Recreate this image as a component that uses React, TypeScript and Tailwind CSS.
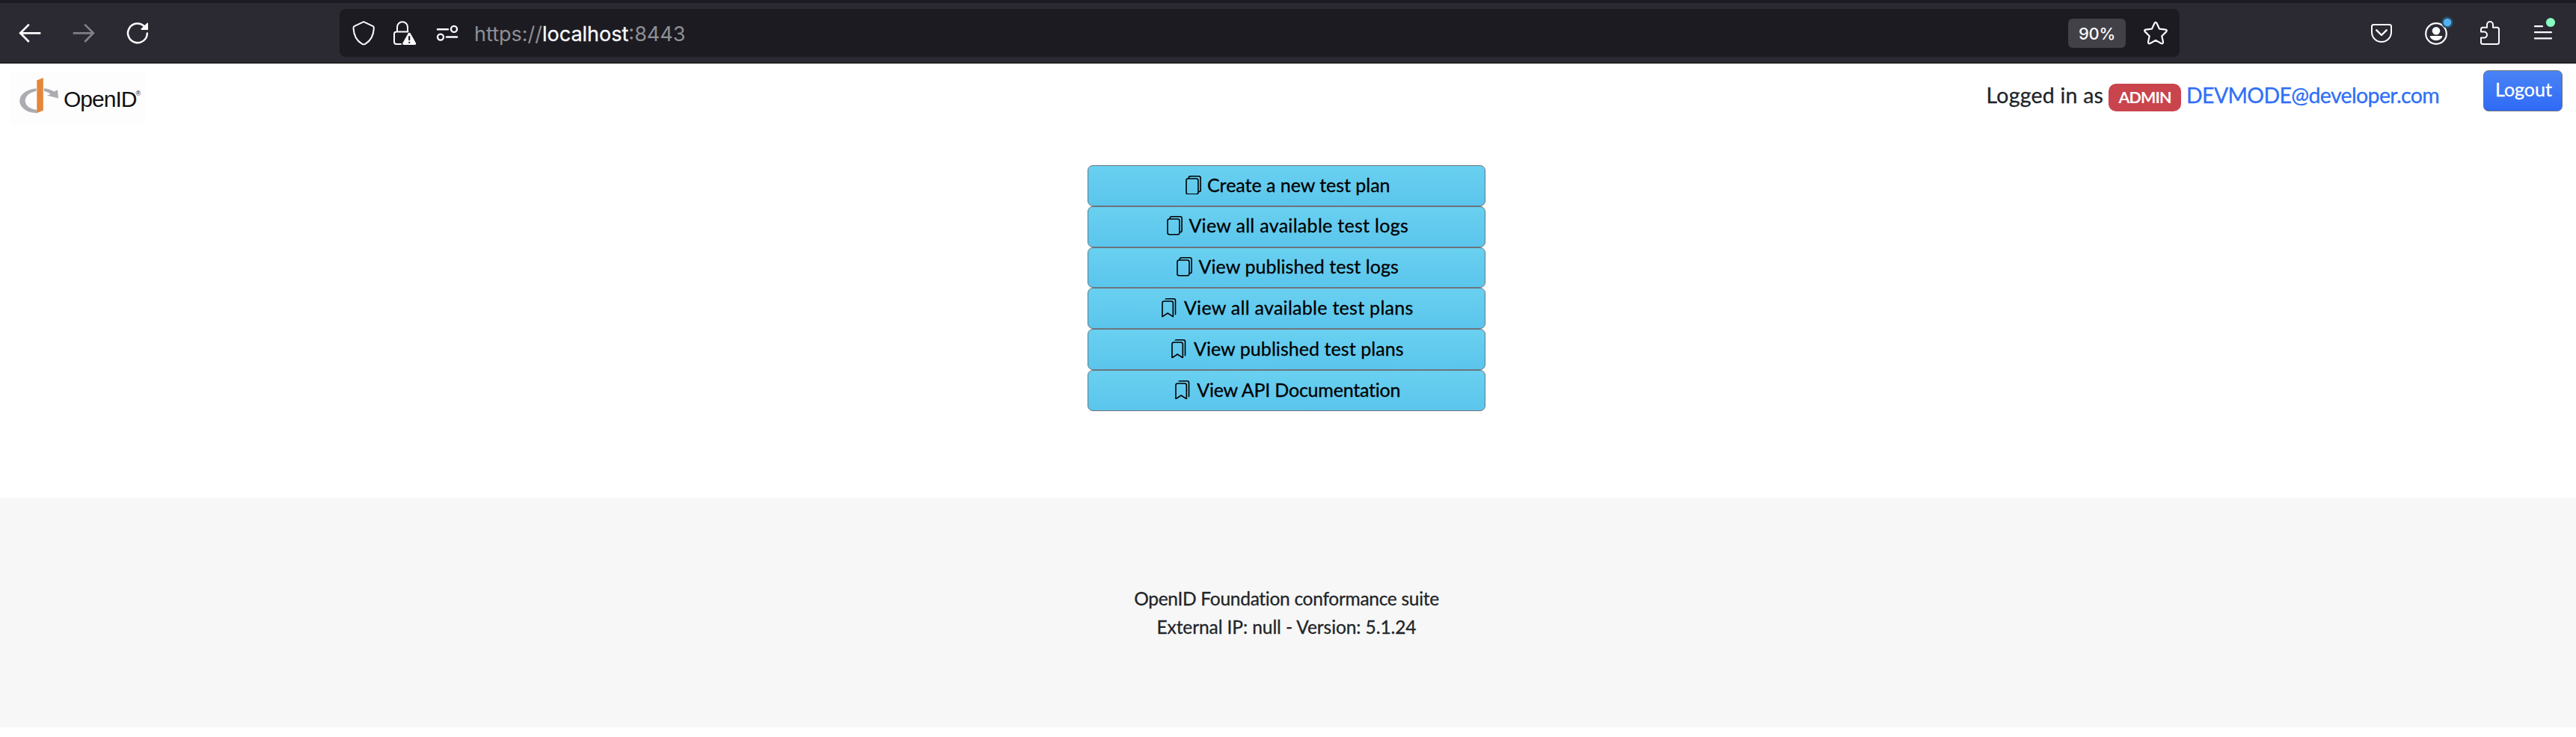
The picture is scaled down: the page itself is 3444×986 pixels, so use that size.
import type { ReactNode } from "react";
import { BsBookmarks, BsFiles } from "react-icons/bs";

type IconProps = { box: string; className?: string; children: ReactNode };

function Icon({ box, className = "", children }: IconProps) {
  return (
    <svg
      viewBox={box}
      className={`h-10 w-10 shrink-0 overflow-visible ${className}`}
      fill="none"
      stroke="currentColor"
      strokeWidth="2"
      strokeLinecap="round"
      strokeLinejoin="round"
    >
      {children}
    </svg>
  );
}

function BrowserToolbar() {
  return (
    <div className="h-[85px] border-t-4 border-b border-t-[#1c1b22] border-b-[#0c0c0d] bg-[#2b2a33]">
      <div className="flex h-20 items-center pl-[20px] text-[#fbfbfe]">
        <Icon box="20 24 40 40">
          <path d="M53 44.3H27.5M37.8 33.6L27.2 44.3L37.8 55" strokeWidth="2.7" strokeLinecap="square" strokeLinejoin="miter" />
        </Icon>
        <Icon box="92 24 40 40" className="ml-8 text-[#807f87]">
          <path d="M99 44.3H124.5M114.2 33.6L124.8 44.3L114.2 55" strokeWidth="2.7" strokeLinecap="square" strokeLinejoin="miter" />
        </Icon>
        <Icon box="164 24 40 40" className="ml-8">
          <path d="M196.8 44.5A12.9 12.9 0 1 1 192.8 35" strokeWidth="2.5" />
          <path d="M198 31V40H189Q187.8 39.6 188.6 38.6L196.4 31Q197.5 30.2 198 31Z" fill="currentColor" stroke="none" />
        </Icon>

        <div className="ml-[250px] flex h-16 w-[2460px] shrink-0 items-center rounded-lg bg-[#1c1b22] pl-[12px]">
          <Icon box="466 24 40 40">
            <path d="M486.2 29.2L498.8 35.2Q500 36 499.900 37.6C499.4 47 495.4 54.8 488.2 58.8Q486.2 59.8 484.2 58.8C477 54.8 473 47 472.5 37.6Q472.4 36 473.6 35.2Z" />
          </Icon>
          <Icon box="520 24 40 40" className="ml-[14px]">
            <path d="M531 42.6V36.2A7 7 0 0 1 545 36.2V42.6M545.5 42.6H530A3 3 0 0 0 527 45.6V56A3 3 0 0 0 530 59H536" />
            <path d="M545.7 44.6Q547.2 42.8 548.7 44.6L556 57.6Q556.7 60 554.5 60H540Q537.7 60 538.4 57.6Z" fill="currentColor" stroke="none" />
            <path d="M547.2 49V53.2M547.2 56.8V57" stroke="#1c1b22" strokeWidth="2.2" />
          </Icon>
          <Icon box="578 24 40 40" className="ml-[18px]">
            <path d="M585 39.3H599M597 49.6H611" strokeWidth="2.5" />
            <circle cx="607" cy="38.9" r="4" strokeWidth="2.4" />
            <circle cx="589" cy="49.6" r="4" strokeWidth="2.4" />
          </Icon>
          <div className="ml-[16px] flex pt-1 font-['Inter',sans-serif] text-[27px] leading-8 text-[#8f8f93]">
            <span>https://</span>
            <span className="text-[#fbfbfe] [-webkit-text-stroke:0.3px]">localhost</span>
            <span>:8443</span>
          </div>
          <div className="ml-auto flex h-[39px] w-[77px] items-center justify-center rounded-md bg-[#424148] pt-0.5 font-['Inter',sans-serif] text-[22px] font-medium tracking-[-0.3px] text-[#fbfbfe]">
            90%
          </div>
          <Icon box="2862 24 40 40" className="mr-3 ml-[20px]">
            <path
              d="M2880.4 31.2Q2882 28.7 2883.6 31.2L2887 38.6L2895.3 39.6Q2898 40.3 2896.2 42.4L2890.3 48.2L2892 56.2Q2892 59.2 2889.3 58L2882 53.9L2874.7 58Q2872 59.2 2872 56.2L2873.7 48.2L2867.8 42.4Q2866 40.3 2868.7 39.6L2877 38.6Z"
              strokeWidth="2.2"
            />
          </Icon>
        </div>

        <Icon box="3164 24 40 40" className="ml-[250px]">
          <path d="M3173.5 33H3194.5Q3197 33 3197 35.5V43A13 13 0 0 1 3171 43V35.5Q3171 33 3173.5 33Z" />
          <path d="M3177.3 40.3L3184 47L3190.7 40.3" strokeWidth="2.4" />
        </Icon>
        <Icon box="3237 24 40 40" className="ml-[33px]">
          <circle cx="3257" cy="45" r="13.8" strokeWidth="2.2" />
          <circle cx="3257" cy="41.2" r="5.3" fill="currentColor" stroke="none" />
          <path d="M3250 48H3264Q3266 48 3265.2 49.5A9.5 9.5 0 0 1 3248.8 49.5Q3248 48 3250 48Z" fill="currentColor" stroke="none" />
          <circle cx="3272" cy="30" r="7.8" fill="#2a5068" stroke="none" />
          <circle cx="3272" cy="30" r="5.3" fill="#54b0f3" stroke="none" />
        </Icon>
        <Icon box="3309 24 40 40" className="ml-8">
          <path d="M3325 36.8V33A4 4 0 0 1 3333 33V36.8H3338.5Q3341 36.8 3341 39.3V56.5Q3341 59 3338.5 59H3319.5Q3317 59 3317 56.5V50.6H3321A4 4 0 0 0 3321 42.6H3317V39.3Q3317 36.8 3319.5 36.8Z" />
        </Icon>
        <Icon box="3380 24 40 40" className="ml-[31px]">
          <path d="M3389 35.2H3399M3389 43.2H3411M3389 51.4H3411" strokeWidth="2.3" />
          <circle cx="3410" cy="30" r="6.1" fill="#88ffc2" stroke="none" />
        </Icon>
      </div>
    </div>
  );
}

function Logo() {
  return (
    <div className="mt-3 ml-[14px] flex h-[68px] w-[181px] bg-[#fdfdfd]">
      <svg viewBox="14 97 70 68" className="h-[68px] w-[70px] shrink-0">
        <path d="M48.5 118.2C35 119.5 26.3 126.5 26.3 134.8C26.3 144.3 36 151 49.5 151.3V147C40 146 33.7 141.2 33.7 134.8C33.7 128.5 39.5 123.3 48.5 121.9Z" fill="#abacb0" />
        <path d="M58.8 118.2C64.5 118.7 68.8 120.2 72.2 122.6L77 120.3L78 131.4L63 127.8L67.6 125.8C65.2 123.7 62.4 122.5 58.8 121.9Z" fill="#abacb0" />
        <path d="M49.3 107.5L57.8 104V147.7L49.3 151.3Z" fill="#e58639" />
      </svg>
      <div className="flex pt-[19px] pl-px font-['Liberation_Sans',Arial,sans-serif] text-[#111]">
        <span className="text-[30px] leading-[34px] tracking-[-1px]">OpenID</span>
        <span className="-ml-px pt-[3px] text-[9px] leading-3">®</span>
      </div>
    </div>
  );
}

function PageHeader() {
  return (
    <header className="flex h-[136px] justify-between">
      <Logo />
      <div className="flex items-start pr-[18px]">
        <div className="flex items-start pt-[27px] text-[28.5px] leading-[37px] text-[#212529]">
          <span className="-mt-[3px] tracking-[0.22px] [-webkit-text-stroke:0.3px]">Logged in as</span>
          <span className="ml-[7px] flex h-[37px] w-[97px] items-center justify-center rounded-[10px] bg-[#c9444d] text-[21.5px] font-bold tracking-[-0.9px] text-white">
            ADMIN
          </span>
          <a className="-mt-[3px] ml-[7px] tracking-[-0.65px] text-[#2f6ff6] [-webkit-text-stroke:0.3px]">
            DEVMODE@developer.com
          </a>
        </div>
        <button className="mt-[9px] ml-[59px] h-[55px] w-[106px] rounded-[7px] border border-[#6c757d] bg-linear-to-b from-[#4a83f5] to-[#2f6af6] pb-1 pl-0.5 text-[25px] text-white [-webkit-text-stroke:0.3px]">
          Logout
        </button>
      </div>
    </header>
  );
}

const actions = [
  { icon: BsFiles, label: "Create a new test plan", tracking: "tracking-[-0.03px]" },
  { icon: BsFiles, label: "View all available test logs", tracking: "tracking-[0.3px]" },
  { icon: BsFiles, label: "View published test logs", tracking: "tracking-[0.06px]" },
  { icon: BsBookmarks, label: "View all available test plans", tracking: "tracking-[0.28px]" },
  { icon: BsBookmarks, label: "View published test plans", tracking: "tracking-[0.06px]" },
  { icon: BsBookmarks, label: "View API Documentation", tracking: "tracking-[-0.22px]" },
];

export default function App() {
  return (
    <div className="h-[986px] overflow-hidden bg-white font-['Lato','Noto_Sans',sans-serif]">
      <BrowserToolbar />
      <PageHeader />
      <main className="flex h-[445px] flex-col items-center pr-1">
        {actions.map(({ icon: ActionIcon, label, tracking }) => (
          <button
            key={label}
            className="flex h-[54.83px] w-[532px] items-center justify-center gap-[7px] rounded-[7px] border border-[#6c757d] bg-linear-to-b from-[#69d0f0] to-[#5bc5ec] pb-0.5 text-[25px] text-black [-webkit-text-stroke:0.3px]"
          >
            <ActionIcon className="size-[25.5px]" />
            <span className={tracking}>{label}</span>
          </button>
        ))}
      </main>
      <footer className="h-[307px] bg-[#f7f7f7] pt-[116px] pr-1 text-center text-[24.5px] leading-[38px] text-[#212529] [-webkit-text-stroke:0.3px]">
        <p className="tracking-[-0.29px]">OpenID Foundation conformance suite</p>
        <p className="tracking-[-0.08px]">External IP: null - Version: 5.1.24</p>
      </footer>
    </div>
  );
}
